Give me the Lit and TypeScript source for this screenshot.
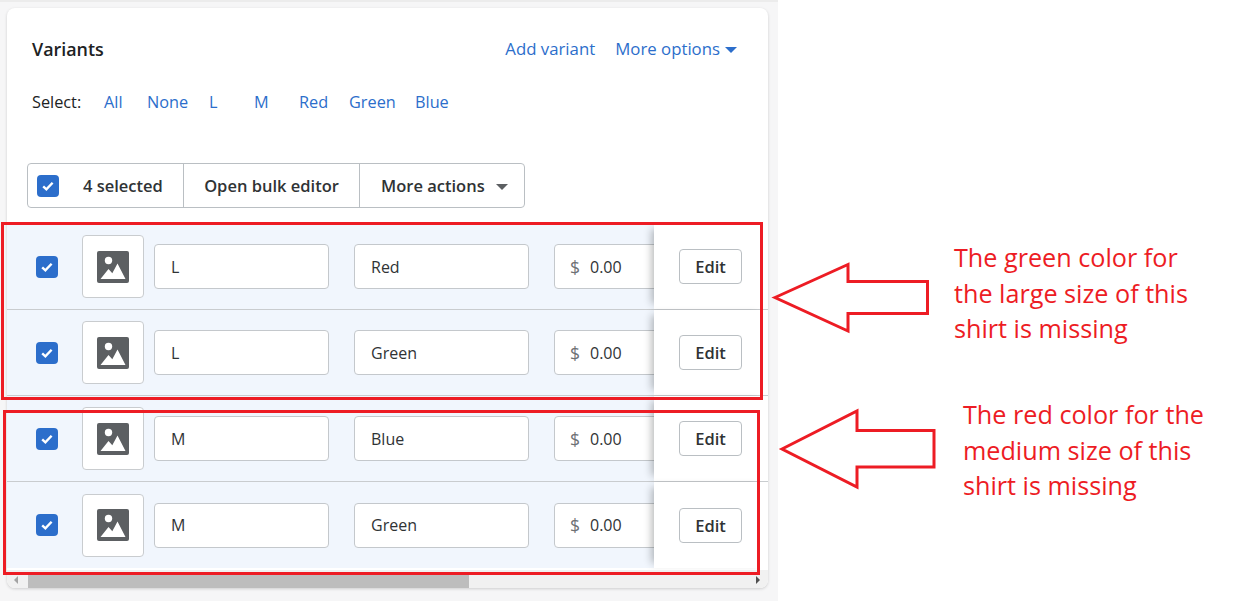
import { LitElement, html, css, svg } from "lit";
import { customElement } from "lit/decorators.js";

const rows = [
  ["L", "Red"],
  ["L", "Green"],
  ["M", "Blue"],
  ["M", "Green"],
];

@customElement("app-root")
export class AppRoot extends LitElement {
  static styles = css`
    :host { display: block; position: relative; width: 1237px; height: 601px; overflow: hidden; background: #fff;
      font-family: "Open Sans", "Noto Sans", sans-serif; font-size: 16px; color: #202223; }
    * { box-sizing: border-box; }
    .page { width: 778px; height: 601px; background: #f6f6f7; border-top: 2px solid #ececec; padding: 6px 10px 0 7px; }
    .card { height: 580px; background: #fff; border-radius: 8px; box-shadow: 0 1px 3px rgba(23,24,24,.18); display: flex; flex-direction: column; overflow: hidden; }
    .head { height: 77px; padding: 29px 31px 0 25px; display: flex; align-items: flex-start; justify-content: space-between; }
    .title { font-weight: 600; font-size: 17.9px; line-height: 24px; }
    .actions { display: flex; gap: 20px; line-height: 24px; color: #2c6ecb; font-size: 16.8px; }
    .caret { display: inline-block; margin-left: 5px; vertical-align: 2px; border: 6px solid transparent; border-top-color: #2c6ecb; border-bottom: 0; }
    .select { height: 78px; padding: 5px 0 0 25px; display: flex; line-height: 24px; font-size: 16.3px; }
    .select span { color: #2c6ecb; }
    .select .lbl { color: #202223; width: 72px; }
    .select .a { width: 43px; } .select .b { width: 62px; } .select .c { width: 45px; } .select .d { width: 50px; } .select .e { width: 66px; }
    .bulk { margin-left: 20px; width: 498px; height: 45px; border: 1px solid #babfc3; border-radius: 4px; display: flex; align-items: center; font-weight: 600; font-size: 16.5px; color: #303335; }
    .bulk > div { height: 100%; display: flex; align-items: center; border-right: 1px solid #babfc3; white-space: nowrap; }
    .bulk > div:last-child { border-right: 0; }
    .b1 { width: 156px; padding-left: 9px; gap: 24px; }
    .b2 { width: 176px; justify-content: center; }
    .b3 { flex: 1; padding-left: 21px; gap: 11px; }
    .caret2 { border: 6px solid transparent; border-top-color: #5c5f62; border-bottom: 0; margin-top: 2px; }
    .check { width: 22px; height: 22px; flex: none; border-radius: 4px; background: #2c6ecb; display: flex; align-items: center; justify-content: center; }
    .rows { margin-top: 16px; flex: 1; display: flex; flex-direction: column; }
    .row { height: 86px; display: flex; border-bottom: 1px solid #c9cccf; }
    .row:last-child { border-bottom: 0; }
    .cells { width: 647px; background: #f1f6fd; display: flex; align-items: center; padding-left: 29px; overflow: hidden; flex: none; }
    .thumb { width: 62px; height: 63px; flex: none; margin-left: 24px; background: #fff; border: 1px solid #c9cccf; border-radius: 4px; display: flex; align-items: center; justify-content: center; }
    .field { height: 45px; width: 175px; flex: none; background: #fff; border: 1px solid #c4c8cc; border-radius: 4px; display: flex; align-items: center; padding-left: 16px; color: #303335; }
    .f1 { margin-left: 10px; } .f2 { margin-left: 25px; } .f3 { margin-left: 25px; gap: 10px; padding-left: 15px; }
    .dollar { color: #6d7175; font-size: 17.5px; }
    .edit { flex: 1; background: #fff; box-shadow: -7px 0 8px -5px rgba(23,24,24,.32); display: flex; align-items: center; padding-left: 25px; position: relative; }
    .btn { width: 63px; height: 35px; border: 1px solid #babfc3; border-radius: 4px; display: flex; align-items: center; justify-content: center; font-weight: 600; font-size: 16.5px; color: #303335; }
    .scroll { height: 18px; background: #f1f1f1; padding: 2px 14px 0 21px; display: flex; align-items: center; position: relative; }
    .thumbbar { width: 441px; height: 17px; background: #bdbdbd; }
    .arrow-l, .arrow-r { position: absolute; top: 6px; border: 4px solid transparent; }
    .arrow-l { left: 7px; border-right-color: #a3a3a3; border-left: 0; }
    .arrow-r { right: 8px; border-left-color: #505050; border-right: 0; }
    .overlay { position: absolute; left: 0; top: 0; }
    .note { position: absolute; color: #ed1c24; font-family: "Open Sans", sans-serif; font-size: 25.2px; line-height: 35.5px; white-space: nowrap; }
    .n1 { left: 954px; top: 240px; }
    .n2 { left: 963px; top: 397px; }
  `;

  private tick() {
    return html`<span class="check"><svg width="16" height="16" viewBox="0 0 16 16"><path d="M3.2 8.4 6.4 11.4 12.6 4.8" fill="none" stroke="#fff" stroke-width="2.4"/></svg></span>`;
  }

  render() {
    return html`
      <div class="page">
        <div class="card">
          <div class="head">
            <div class="title">Variants</div>
            <div class="actions"><span>Add variant</span><span>More options<i class="caret"></i></span></div>
          </div>
          <div class="select">
            <span class="lbl">Select:</span>
            <span class="a">All</span><span class="b">None</span><span class="c">L</span><span class="c">M</span><span class="d">Red</span><span class="e">Green</span><span>Blue</span>
          </div>
          <div class="bulk">
            <div class="b1">${this.tick()}<span>4 selected</span></div>
            <div class="b2">Open bulk editor</div>
            <div class="b3">More actions<i class="caret2"></i></div>
          </div>
          <div class="rows">
            ${rows.map(([a, b]) => html`
              <div class="row">
                <div class="cells">
                  ${this.tick()}
                  <div class="thumb"><svg width="32" height="32" viewBox="0 0 32 32">
                    <rect width="32" height="32" rx="2" fill="#5c5f62"/>
                    <circle cx="11.500" cy="9.500" r="3.700" fill="#fff"/>
                    <path d="M3.500 28 11.500 18l3.800 4.200L20.500 12.500 28.500 28z" fill="#fff"/>
                  </svg></div>
                  <div class="field f1">${a}</div>
                  <div class="field f2">${b}</div>
                  <div class="field f3"><span class="dollar">$</span><span>0.00</span></div>
                </div>
                <div class="edit"><div class="btn">Edit</div></div>
              </div>`)}
          </div>
          <div class="scroll"><i class="arrow-l"></i><div class="thumbbar"></div><i class="arrow-r"></i></div>
        </div>
      </div>
      <svg class="overlay" width="1237" height="601" fill="none" stroke="#ed1c24" stroke-width="3">
        ${svg`<rect x="2.500" y="223.500" width="759" height="175"/>
        <rect x="4.500" y="411.500" width="754" height="162"/>
        <path d="M775 297.500 848 264.500V281.500H927.500V313.500H848V331z"/>
        <path d="M782 449 857 411V430.500H934V467H857V487z"/>`}
      </svg>
      <div class="note n1">The green color for<br>the large size of this<br>shirt is missing</div>
      <div class="note n2">The red color for the<br>medium size of this<br>shirt is missing</div>
    `;
  }
}
